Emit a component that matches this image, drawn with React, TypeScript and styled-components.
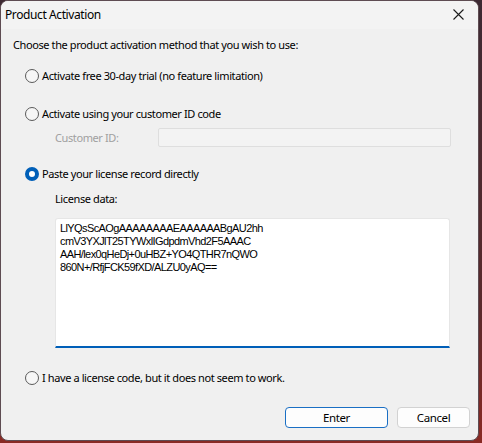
import styled, { createGlobalStyle } from 'styled-components';

const GlobalStyle = createGlobalStyle`
  html, body {
    margin: 0;
    padding: 0;
    background: linear-gradient(180deg, #3d2a33 0%, #5a2a2c 70%, #8a2a24 100%);
    width: 482px;
    height: 443px;
    overflow: hidden;
  }
  * { box-sizing: border-box; }
`;

const font = `"Noto Sans", "Open Sans", sans-serif`;

const Window = styled.div`
  width: 479px;
  height: 441px;
  background: #f0f0f0;
  border: 1px solid #5e4c52;
  border-radius: 8px;
  overflow: hidden;
  display: flex;
  flex-direction: column;
  font-family: ${font};
  font-size: 11px;
  letter-spacing: -0.4px;
  color: #000;
`;

const TitleBar = styled.div`
  height: 28px;
  flex: none;
  display: flex;
  align-items: center;
  justify-content: space-between;
  padding: 0 8px 0 4px;
  background: #f3f3f3;
`;

const Title = styled.span`
  font-size: 12px;
  line-height: 16px;
  margin-top: -1px;
`;

const CloseButton = styled.div`
  width: 24px;
  height: 24px;
  display: flex;
  align-items: center;
  justify-content: center;
  margin-top: -2px;
`;

const Content = styled.div`
  flex: 1;
  display: flex;
  flex-direction: column;
  padding: 8px 0 0 12px;
`;

const Text = styled.div`
  line-height: 16px;
  white-space: nowrap;
`;

const RadioRow = styled.div<{ $top: number }>`
  display: flex;
  align-items: center;
  gap: 3px;
  margin-top: ${p => p.$top}px;
  margin-left: 12px;
  line-height: 16px;
  white-space: nowrap;
`;

const Radio = styled.span<{ $checked?: boolean }>`
  width: 14px;
  height: 14px;
  border-radius: 50%;
  flex: none;
  border: ${p => (p.$checked ? '4px solid #005fb8' : '1px solid #5a5a5a')};
  background: ${p => (p.$checked ? '#ffffff' : '#f6f6f6')};
`;

const Indented = styled.div<{ $top: number }>`
  margin-left: 42px;
  margin-top: ${p => p.$top}px;
  display: flex;
  align-items: center;
`;

const DisabledLabel = styled.span`
  color: #a0a0a0;
  width: 103px;
  line-height: 16px;
`;

const DisabledInput = styled.div`
  width: 293px;
  height: 19px;
  background: #f3f3f3;
  border: 1px solid #dedede;
  border-radius: 2px;
`;

const LicenseBox = styled.div`
  margin-left: 42px;
  margin-top: 11px;
  width: 395px;
  height: 130px;
  background: #ffffff;
  border: 1px solid #e6e6e6;
  border-bottom: 2px solid #005fb8;
  border-radius: 3px 3px 0 0;
  padding: 3px 0 0 4px;
  font-family: "Liberation Sans", Arial, sans-serif;
  font-size: 11px;
  line-height: 13px;
  letter-spacing: -0.6px;
  white-space: pre;
  color: #000;
`;

const ButtonRow = styled.div`
  display: flex;
  justify-content: flex-end;
  gap: 9px;
  margin-top: 21px;
  padding-right: 8px;
`;

const Button = styled.div<{ $primary?: boolean; $w: number }>`
  width: ${p => p.$w}px;
  height: 21px;
  display: flex;
  align-items: center;
  justify-content: center;
  background: #fdfdfd;
  border: 1px solid ${p => (p.$primary ? '#1a6fc4' : '#d2d2d2')};
  border-radius: 4px;
  font-size: 11.5px;
`;

const licenseText = `LlYQsScAOgAAAAAAAAEAAAAAABgAU2hh
cmV3YXJlT25TYWxlIGdpdmVhd2F5AAAC
AAH/lex0qHeDj+0uHBZ+YO4QTHR7nQWO
860N+/RfjFCK59fXD/ALZU0yAQ==`;

export default function App() {
  return (
    <>
      <GlobalStyle />
      <Window>
        <TitleBar>
          <Title>Product Activation</Title>
          <CloseButton>
            <svg width="11" height="11" viewBox="0 0 11 11">
              <path d="M0.5 0.5 L10.5 10.5 M10.5 0.5 L0.5 10.5" stroke="#1a1a1a" strokeWidth="1.1" fill="none" />
            </svg>
          </CloseButton>
        </TitleBar>
        <Content>
          <Text>Choose the product activation method that you wish to use:</Text>
          <RadioRow $top={15}>
            <Radio />
            <span>Activate free 30-day trial (no feature limitation)</span>
          </RadioRow>
          <RadioRow $top={22}>
            <Radio />
            <span>Activate using your customer ID code</span>
          </RadioRow>
          <Indented $top={6}>
            <DisabledLabel>Customer ID:</DisabledLabel>
            <DisabledInput />
          </Indented>
          <RadioRow $top={19}>
            <Radio $checked />
            <span>Paste your license record directly</span>
          </RadioRow>
          <Indented $top={9}>
            <Text>License data:</Text>
          </Indented>
          <LicenseBox>{licenseText}</LicenseBox>
          <RadioRow $top={22}>
            <Radio />
            <span>I have a license code, but it does not seem to work.</span>
          </RadioRow>
          <ButtonRow>
            <Button $primary $w={103}>Enter</Button>
            <Button $w={73}>Cancel</Button>
          </ButtonRow>
        </Content>
      </Window>
    </>
  );
}
